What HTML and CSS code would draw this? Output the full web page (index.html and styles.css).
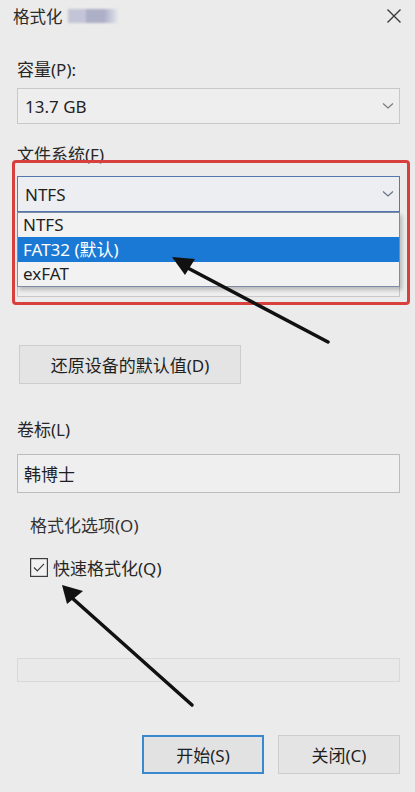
FILE: index.html
```html
<!DOCTYPE html>
<html>
<head>
  <meta charset="utf-8">
  <title>格式化</title>
  <link rel="stylesheet" href="styles.css">
</head>
<body>
  <div class="dialog">

    <!-- Title bar -->
    <div class="titlebar">
      <span class="title">格式化</span>
      <span class="drive-name"></span>
      <span class="close">
        <svg width="20" height="20" viewBox="0 0 20 20"><path d="M3.5 3.5L16.5 16.5M16.5 3.5L3.5 16.5" stroke="#3a3a3a" stroke-width="1.4" fill="none"/></svg>
      </span>
    </div>

    <div class="form">
      <div class="label cap-label">容量(P):</div>
      <div class="select">
        <span>13.7 GB</span>
        <svg class="chev" width="12" height="8" viewBox="0 0 12 8"><path d="M1 1.5L6 6L11 1.5" stroke="#7a7a7a" stroke-width="1.2" fill="none"/></svg>
      </div>

      <div class="label fs-label">文件系统(F)</div>
      <div class="combo">
        <div class="select active">
          <span>NTFS</span>
          <svg class="chev" width="12" height="8" viewBox="0 0 12 8"><path d="M1 1.5L6 6L11 1.5" stroke="#6a7380" stroke-width="1.2" fill="none"/></svg>
        </div>
        <!-- open dropdown list -->
        <div class="dropdown">
          <div class="option">NTFS</div>
          <div class="option selected">FAT32 (默认)</div>
          <div class="option">exFAT</div>
        </div>
      </div>

      <!-- allocation size row, covered by the open list -->
      <div class="label unit-label"></div>
      <div class="select unit-select"></div>

      <button class="btn restore">还原设备的默认值(D)</button>

      <div class="label vol-label">卷标(L)</div>
      <div class="input">韩博士</div>

      <div class="group-title">格式化选项(O)</div>
      <div class="check">
        <span class="box">
          <svg width="18" height="19" viewBox="0 0 18 19"><rect x="0.6" y="0.6" width="16.8" height="17.8" fill="#f2f2f2" stroke="#3c3c3c" stroke-width="1.2"/><path d="M4 9.5L7.3 12.8L14 5.8" stroke="#3c3c3c" stroke-width="1.2" fill="none"/></svg>
        </span>
        快速格式化(Q)
      </div>

      <div class="progress"></div>

      <div class="actions">
        <button class="btn primary">开始(S)</button>
        <button class="btn">关闭(C)</button>
      </div>
    </div>

    <!-- Annotations drawn over the dialog -->
    <div class="mark-box"></div>
    <svg class="arrows" width="415" height="792" viewBox="0 0 415 792">
      <path d="M328 342L184 266" stroke="#111" stroke-width="3.5" stroke-linecap="round"/>
      <polygon points="172,257 195,259 185,275" fill="#111"/>
      <path d="M192 705L71 597" stroke="#111" stroke-width="3.5" stroke-linecap="round"/>
      <polygon points="62,585 83,591 67,604" fill="#111"/>
    </svg>
  </div>
</body>
</html>
```

FILE: styles.css
```css
body {
  margin: 0;
  background-color: #ebebeb;
  font-family: "Noto Sans", "Noto Sans CJK SC", sans-serif;
  font-size: 17px;
  color: #1f1f1f;
}
.dialog {
  position: relative;
  width: 415px;
  height: 792px;
  overflow: hidden;
}
.titlebar {
  height: 32px;
  display: flex;
  align-items: center;
  padding: 0 11px 0 13px;
}
.title {
  font-size: 16.5px;
  color: #2a2a2a;
}
.drive-name {
  width: 50px;
  height: 14px;
  margin-left: 5px;
  background: linear-gradient(90deg, #c4c4d7 0, #c4c4d7 36%, #adafc7 36%, #adafc7 72%, #e6e6ec 100%);
  filter: blur(0.8px);
}
.close {
  margin-left: auto;
  width: 20px;
  height: 20px;
}
.form {
  display: flex;
  flex-direction: column;
  padding: 0 15px 0 17px;
}
.label {
  height: 20px;
  line-height: 20px;
  color: #262626;
}
.cap-label {
  margin-top: 28px;
}
.fs-label {
  margin-top: 21px;
}
.unit-label {
  margin-top: 14px;
}
.vol-label {
  margin-top: 36px;
}
.select {
  box-sizing: border-box;
  height: 36px;
  margin-top: 8px;
  padding: 0 5px 0 7px;
  display: flex;
  align-items: center;
  border: 1px solid #c8c8c8;
  background-color: #eeeeee;
}
.select .chev {
  margin-left: auto;
}
.combo {
  position: relative;
  margin-top: 11px;
}
.combo .select {
  margin-top: 0;
}
.select.active {
  border-color: #5577ad;
  background-color: #eceef2;
}
.dropdown {
  position: absolute;
  top: 100%;
  left: 0;
  right: 0;
  z-index: 2;
  border: 1px solid #7d8ba4;
  background-color: #f2f2f2;
  box-shadow: 2px 3px 4px rgba(0, 0, 0, 0.22);
}
.option {
  height: 24px;
  line-height: 24px;
  padding-left: 5px;
}
.option.selected {
  height: 25px;
  line-height: 25px;
  background-color: #1a79d5;
  color: #fff;
}
.unit-select {
  height: 37px;
  margin-top: 14px;
}
.btn {
  box-sizing: border-box;
  height: 39px;
  font-family: inherit;
  font-size: 17px;
  color: #1f1f1f;
  background-color: #e4e4e4;
  border: 1px solid #cdcdcd;
  padding: 0;
}
.restore {
  align-self: flex-start;
  width: 222px;
  margin: 48px 0 0 2px;
}
.input {
  box-sizing: border-box;
  height: 39px;
  margin-top: 14px;
  padding-left: 6px;
  display: flex;
  align-items: center;
  border: 1px solid #bcbcbc;
  background-color: #efefef;
}
.group-title {
  height: 20px;
  line-height: 20px;
  margin-top: 23px;
  padding-left: 13px;
  color: #333;
}
.check {
  height: 20px;
  margin-top: 21px;
  padding-left: 13px;
  display: flex;
  align-items: center;
  gap: 5px;
  color: #262626;
}
.check .box {
  display: flex;
}
.progress {
  box-sizing: border-box;
  height: 24px;
  margin-top: 81px;
  border: 1px solid #d9d9d9;
  background-color: #e9e9e9;
}
.actions {
  display: flex;
  justify-content: flex-end;
  gap: 14px;
  margin-top: 53px;
}
.actions .btn {
  width: 122px;
}
.btn.primary {
  border: 2px solid #3a88cd;
  background-color: #e2e2e2;
}
.mark-box {
  position: absolute;
  left: 12px;
  top: 160px;
  width: 398px;
  height: 145px;
  box-sizing: border-box;
  border: 3px solid #d8403e;
  border-radius: 4px;
  z-index: 3;
}
.arrows {
  position: absolute;
  top: 0;
  left: 0;
  z-index: 4;
}
```
